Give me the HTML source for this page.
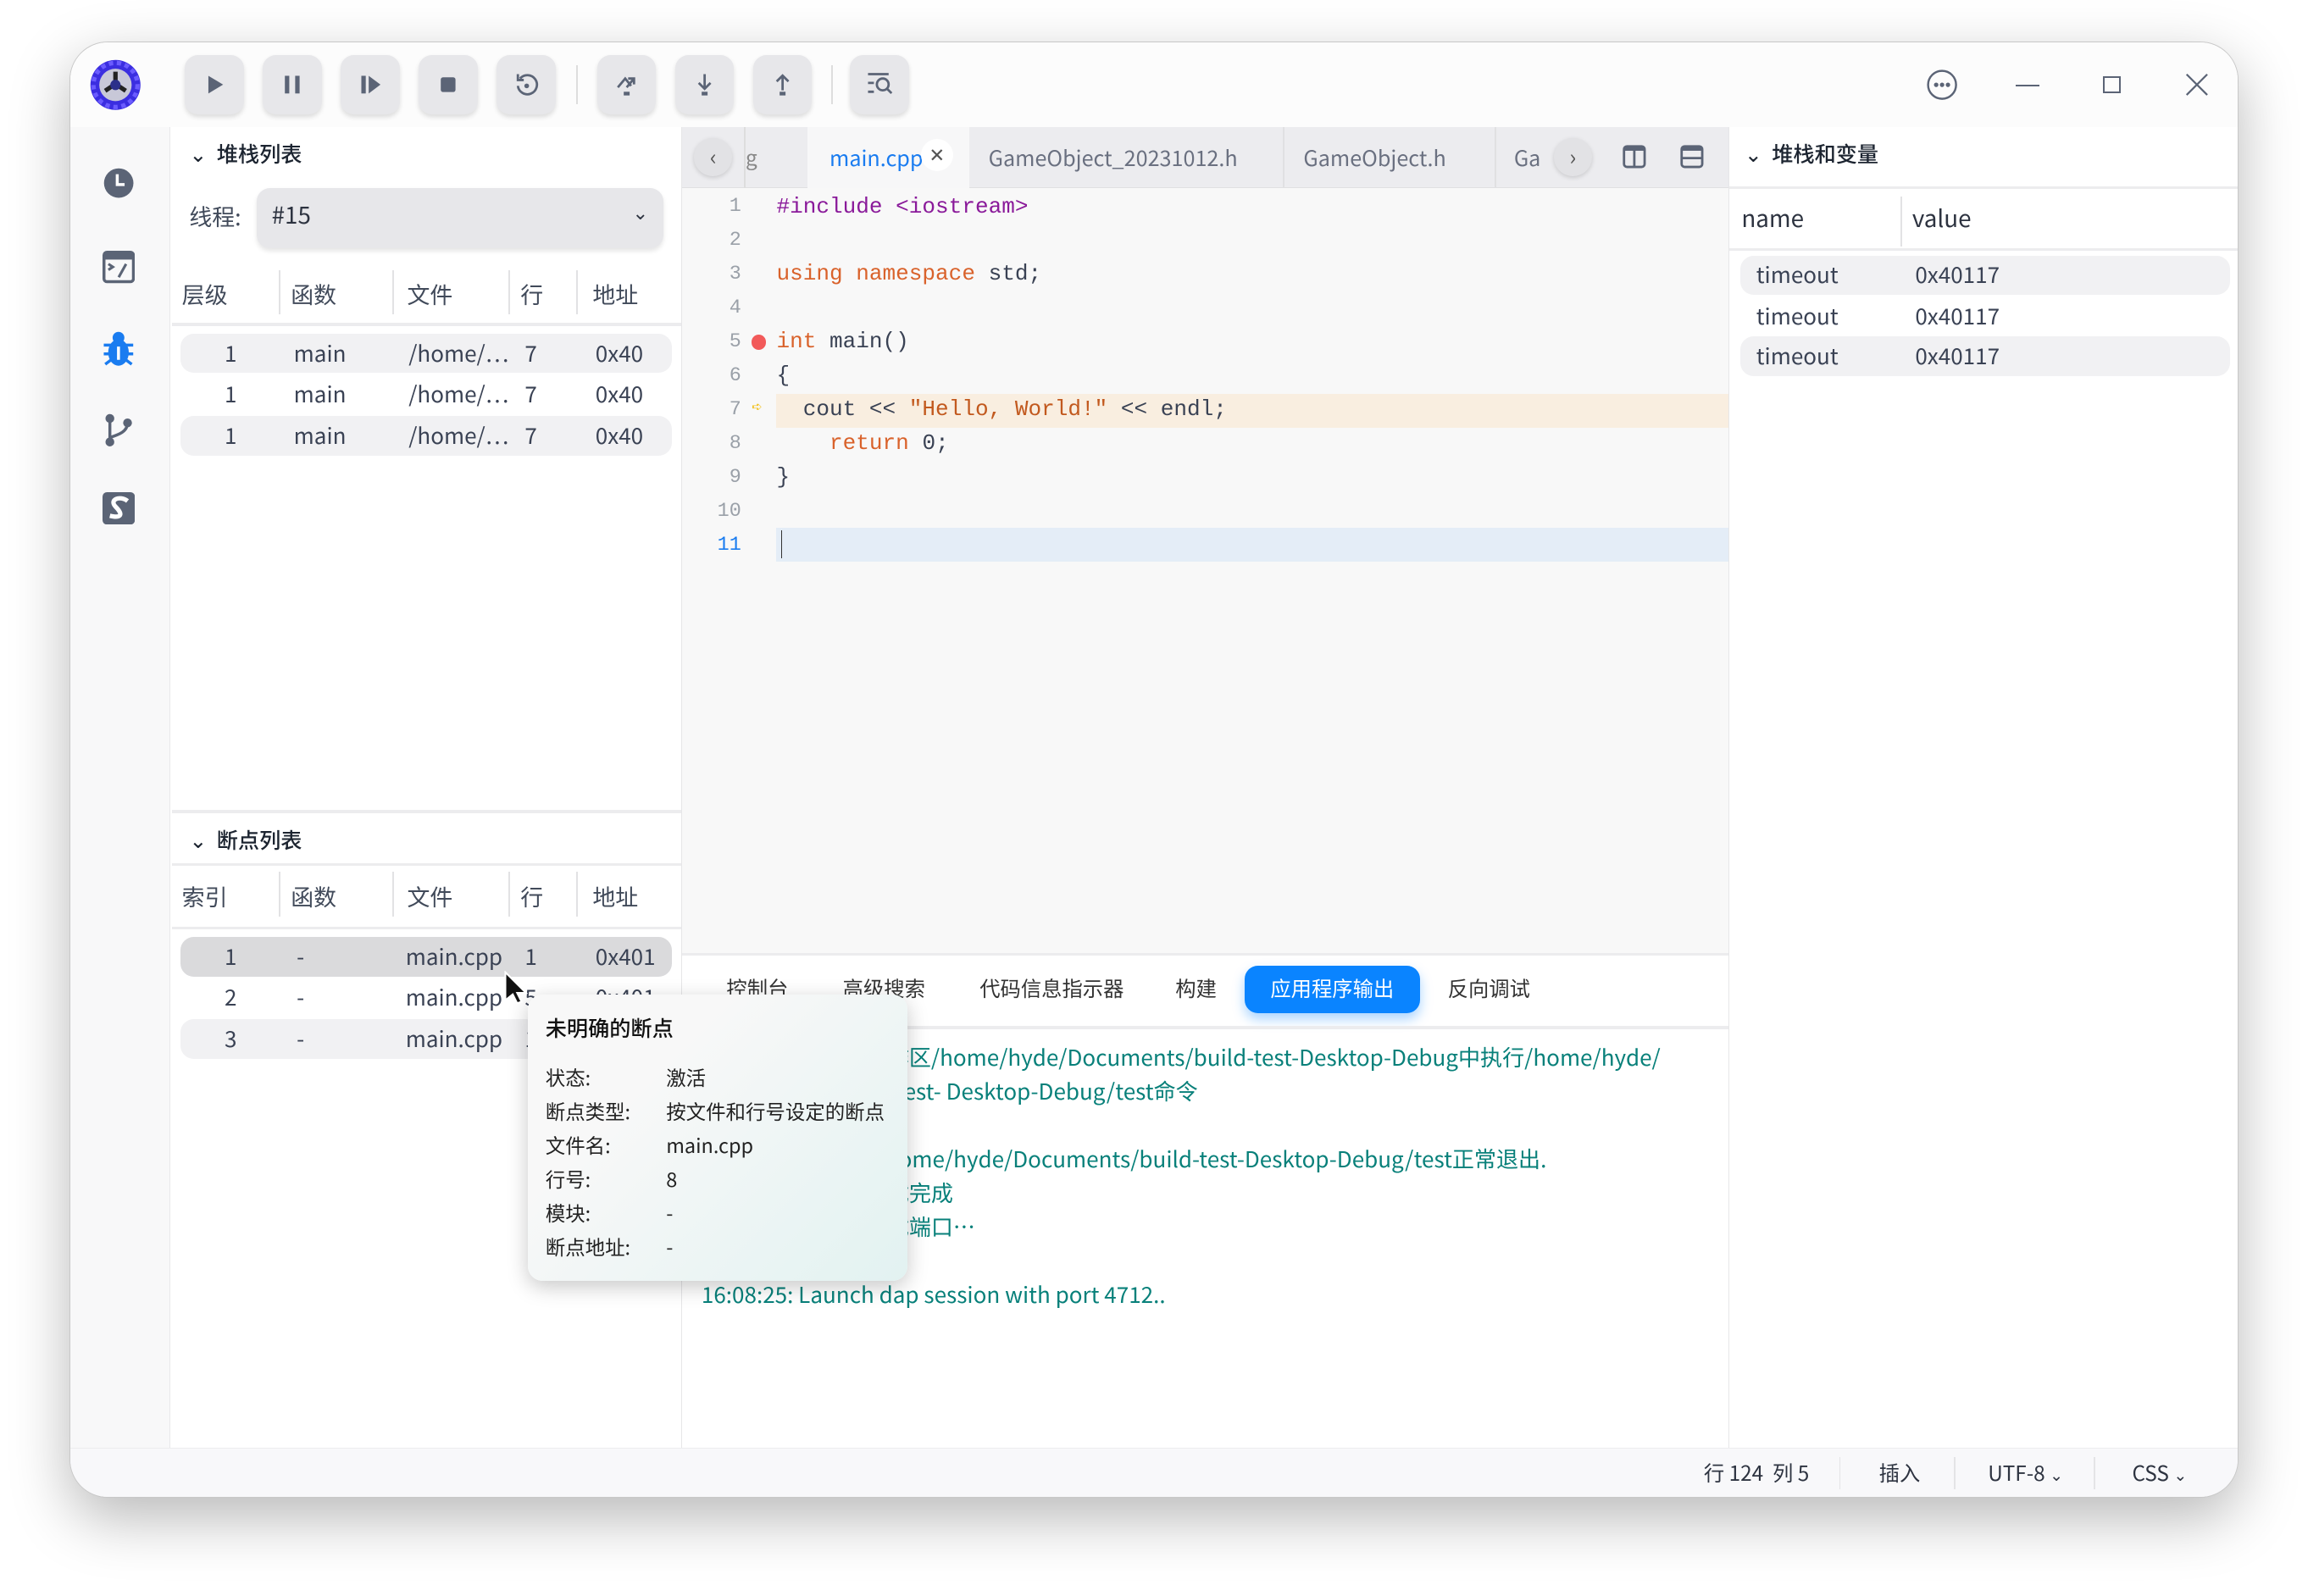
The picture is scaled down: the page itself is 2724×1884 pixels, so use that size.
<!DOCTYPE html>
<html><head><meta charset="utf-8">
<style>
*{box-sizing:border-box;margin:0;padding:0}
html,body{width:2724px;height:1884px;overflow:hidden;background:#fff}
#z{zoom:1.7372;width:1568px;height:1085px;position:relative;font-family:"Noto Sans CJK SC","Liberation Sans",sans-serif;color:#2d3340;font-size:15px;line-height:1.2}
.abs{position:absolute}
.win{left:47px;top:28px;width:1474px;height:990px;border-radius:26px;background:#fff;box-shadow:0 14px 40px rgba(0,0,0,.28);overflow:hidden;border:1px solid #c8c8c8}
.tb{left:0;top:0;width:1474px;height:58px;background:#fcfcfc}
.btn{top:9px;width:40px;height:40px;border-radius:9px;background:#e7e7ea;box-shadow:0 2px 3px rgba(0,0,0,.12);display:flex;align-items:center;justify-content:center}
.sep{top:16px;width:1px;height:26px;background:#ddd}
.side{left:0;top:58px;width:68px;height:897px;background:#f8f8f9;border-right:1px solid #e8e8ea}
.lp{left:69px;top:58px;width:347px;height:897px;background:#fff;border-right:1px solid #e6e6e8}
.hdr{font-size:14.5px;color:#1c2430;font-weight:500}
.th{color:#414a5a;font-size:15.5px}
.row{left:6px;width:334px;height:27px;border-radius:9px}
.cell{position:absolute;top:4px;font-size:15px;color:#3a4254}
.vl{position:absolute;width:1px;background:#e2e2e4}
.code{font-family:"Liberation Mono","DejaVu Sans Mono",monospace;font-size:15px}
.ln{position:absolute;width:40px;text-align:right;color:#9aa0a8;font-family:"Liberation Mono",monospace;font-size:13.5px}
.cl{position:absolute;left:64px;white-space:pre;color:#3a4254}
.out{position:absolute;color:#08807a;font-size:15px;white-space:nowrap}
.tt{position:absolute;font-size:13.5px;color:#222}
</style></head><body><div id="z">
<div class="abs win">
 <div class="abs tb">
  <svg class="abs" style="left:13px;top:11px" width="36" height="36" viewBox="0 0 36 36"><circle cx="18" cy="18" r="17" fill="#3b2ee0"/><circle cx="18" cy="18" r="15" fill="none" stroke="#6b5cff" stroke-width="3" stroke-dasharray="3 2.5"/><circle cx="18" cy="18" r="11" fill="#c8c8d8"/><path d="M18 9v7M11 22l6-4M25 22l-6-4" stroke="#222" stroke-width="3"/><circle cx="18" cy="18" r="3.5" fill="#2b2f8a"/></svg>
  <div class="abs btn" style="left:78px"><svg width="16" height="16"><path d="M4 2l10 6-10 6z" fill="#5b6476"/></svg></div>
  <div class="abs btn" style="left:131px"><svg width="16" height="16"><rect x="3" y="2" width="3" height="12" fill="#5b6476"/><rect x="10" y="2" width="3" height="12" fill="#5b6476"/></svg></div>
  <div class="abs btn" style="left:184px"><svg width="16" height="16"><rect x="2" y="2" width="3" height="12" fill="#5b6476"/><path d="M7 2l8 6-8 6z" fill="#5b6476"/></svg></div>
  <div class="abs btn" style="left:237px"><svg width="16" height="16"><rect x="3" y="3" width="10" height="10" rx="1.5" fill="#5b6476"/></svg></div>
  <div class="abs btn" style="left:290px"><svg width="18" height="18"><path d="M4.5 5A6.5 6.5 0 1 1 3 10" fill="none" stroke="#5b6476" stroke-width="1.6"/><path d="M3 2v4h4" fill="none" stroke="#5b6476" stroke-width="1.6"/><circle cx="9" cy="10" r="1.6" fill="#5b6476"/></svg></div>
  <div class="abs sep" style="left:344px"></div>
  <div class="abs btn" style="left:358px"><svg width="18" height="18"><path d="M3 11l5-6 4 5M10 5h4v4M14 5l-5 6" fill="none" stroke="#5b6476" stroke-width="1.6"/><rect x="7" y="14" width="4" height="2.5" fill="#5b6476"/></svg></div>
  <div class="abs btn" style="left:411px"><svg width="18" height="18"><path d="M9 2v10M5 8l4 4 4-4" fill="none" stroke="#5b6476" stroke-width="1.6"/><rect x="7" y="14" width="4" height="2.5" fill="#5b6476"/></svg></div>
  <div class="abs btn" style="left:464px"><svg width="18" height="18"><path d="M9 13V3M5 7l4-4 4 4" fill="none" stroke="#5b6476" stroke-width="1.6"/><rect x="7" y="14" width="4" height="2.5" fill="#5b6476"/></svg></div>
  <div class="abs sep" style="left:517px"></div>
  <div class="abs btn" style="left:530px"><svg width="20" height="18"><path d="M2 2h14M2 8h4M2 14h4" stroke="#5b6476" stroke-width="1.6"/><circle cx="12" cy="9" r="4" fill="none" stroke="#5b6476" stroke-width="1.6"/><path d="M15 12l3 3" stroke="#5b6476" stroke-width="1.6"/></svg></div>
  <svg class="abs" style="left:1261px;top:18px" width="22" height="22"><circle cx="11" cy="11" r="9.5" fill="none" stroke="#5b6476" stroke-width="1.4"/><circle cx="7" cy="11" r="1.5" fill="#5b6476"/><circle cx="11" cy="11" r="1.5" fill="#5b6476"/><circle cx="15" cy="11" r="1.5" fill="#5b6476"/></svg>
  <div class="abs" style="left:1322px;top:29px;width:16px;height:1.4px;background:#5b6476"></div>
  <div class="abs" style="left:1381px;top:23px;width:12px;height:12px;border:1.4px solid #5b6476"></div>
  <svg class="abs" style="left:1437px;top:21px" width="16" height="16"><path d="M1 1l14 14M15 1L1 15" stroke="#5b6476" stroke-width="1.3"/></svg>
 </div>
 <div class="abs side">
  <svg class="abs" style="left:22px;top:27px" width="22" height="22"><circle cx="11" cy="11" r="10" fill="#5b6476"/><path d="M10 5v7h5" stroke="#fff" stroke-width="2" fill="none"/></svg>
  <svg class="abs" style="left:22px;top:84px" width="22" height="22"><rect x="1" y="1" width="20" height="20" rx="2" fill="none" stroke="#5b6476" stroke-width="2"/><rect x="1" y="1" width="20" height="5" fill="#5b6476"/><path d="M4 9l3 2-3 2M16 9l-5 9" stroke="#5b6476" stroke-width="1.8" fill="none"/></svg>
  <svg class="abs" style="left:21px;top:138px" width="24" height="26"><ellipse cx="12" cy="15" rx="7" ry="9" fill="#1a7cf0"/><circle cx="12" cy="5" r="4" fill="#1a7cf0"/><path d="M2 10h20M2 16h20M3 23l4-3M21 23l-4-3" stroke="#1a7cf0" stroke-width="2"/><rect x="11" y="11" width="2" height="9" fill="#fff"/></svg>
  <svg class="abs" style="left:22px;top:194px" width="22" height="24"><circle cx="5" cy="4" r="3" fill="#5b6476"/><circle cx="5" cy="20" r="3" fill="#5b6476"/><circle cx="17" cy="7" r="3" fill="#5b6476"/><path d="M5 4v16M17 7c0 6-6 8-12 10" stroke="#5b6476" stroke-width="2" fill="none"/></svg>
  <svg class="abs" style="left:22px;top:248px" width="22" height="22"><rect x="0" y="0" width="22" height="22" rx="3" fill="#5b6476"/><path d="M17 6C12 2 4 5 9 10s4 8-4 6" stroke="#fff" stroke-width="3" fill="none"/></svg>
 </div>
 <div class="abs lp">
  <div class="abs hdr" style="left:12px;top:9px">⌄&nbsp;&nbsp;堆栈列表</div>
  <div class="abs th" style="left:12px;top:51px">线程:</div>
  <div class="abs" style="left:58px;top:41px;width:276px;height:41px;border-radius:9px;background:#e7e7ea;box-shadow:0 2px 3px rgba(0,0,0,.1)"><span style="position:absolute;left:10px;top:9px;font-size:16px">#15</span><span style="position:absolute;right:10px;top:8px;font-size:13px">⌄</span></div>
  <div class="abs th" style="left:7px;top:104px">层级</div><div class="abs th" style="left:81px;top:104px">函数</div><div class="abs th" style="left:160px;top:104px">文件</div><div class="abs th" style="left:237px;top:104px">行</div><div class="abs th" style="left:286px;top:104px">地址</div>
  <div class="vl" style="left:73px;top:97px;height:30px"></div><div class="vl" style="left:150px;top:97px;height:30px"></div><div class="vl" style="left:229px;top:97px;height:30px"></div><div class="vl" style="left:275px;top:97px;height:30px"></div>
  <div class="abs" style="left:0;top:133px;width:346px;height:2px;background:#ececee"></div>
  <div class="abs row" style="top:140px;background:#f1f1f3"><span class="cell" style="left:30px">1</span><span class="cell" style="left:77px">main</span><span class="cell" style="left:155px">/home/…</span><span class="cell" style="left:234px">7</span><span class="cell" style="left:282px">0x40</span></div>
  <div class="abs row" style="top:168px"><span class="cell" style="left:30px">1</span><span class="cell" style="left:77px">main</span><span class="cell" style="left:155px">/home/…</span><span class="cell" style="left:234px">7</span><span class="cell" style="left:282px">0x40</span></div>
  <div class="abs row" style="top:196px;background:#f1f1f3"><span class="cell" style="left:30px">1</span><span class="cell" style="left:77px">main</span><span class="cell" style="left:155px">/home/…</span><span class="cell" style="left:234px">7</span><span class="cell" style="left:282px">0x40</span></div>
  <div class="abs" style="left:0;top:464px;width:346px;height:2px;background:#ececee"></div>
  <div class="abs hdr" style="left:12px;top:475px">⌄&nbsp;&nbsp;断点列表</div>
  <div class="abs" style="left:0;top:500px;width:346px;height:2px;background:#ececee"></div>
  <div class="abs th" style="left:7px;top:513px">索引</div><div class="abs th" style="left:81px;top:513px">函数</div><div class="abs th" style="left:160px;top:513px">文件</div><div class="abs th" style="left:237px;top:513px">行</div><div class="abs th" style="left:286px;top:513px">地址</div>
  <div class="vl" style="left:73px;top:506px;height:30px"></div><div class="vl" style="left:150px;top:506px;height:30px"></div><div class="vl" style="left:229px;top:506px;height:30px"></div><div class="vl" style="left:275px;top:506px;height:30px"></div>
  <div class="abs" style="left:0;top:543px;width:346px;height:2px;background:#ececee"></div>
  <div class="abs row" style="top:550px;background:#dadadc"><span class="cell" style="left:30px">1</span><span class="cell" style="left:79px">-</span><span class="cell" style="left:153px">main.cpp</span><span class="cell" style="left:234px">1</span><span class="cell" style="left:282px">0x401</span></div>
  <div class="abs row" style="top:578px"><span class="cell" style="left:30px">2</span><span class="cell" style="left:79px">-</span><span class="cell" style="left:153px">main.cpp</span><span class="cell" style="left:234px">5</span><span class="cell" style="left:282px">0x401</span></div>
  <div class="abs row" style="top:606px;background:#f1f1f3"><span class="cell" style="left:30px">3</span><span class="cell" style="left:79px">-</span><span class="cell" style="left:153px">main.cpp</span><span class="cell" style="left:234px">1</span><span class="cell" style="left:282px">0x401</span></div>
 </div>
 <!-- editor -->
 <div class="abs" style="left:416px;top:58px;width:711px;height:41px;background:#ececef;border-bottom:1px solid #e0e0e2">
  <div class="abs" style="left:8px;top:7px;width:26px;height:26px;border-radius:13px;background:#e2e2e5;box-shadow:0 1px 3px rgba(0,0,0,.15);text-align:center;line-height:25px;color:#555">‹</div>
  <div class="abs" style="left:43px;top:12px;color:#888;font-size:14px">g</div>
  <div class="abs" style="left:42px;top:0;width:1px;height:41px;background:#ddd"></div>
  <div class="abs" style="left:85px;top:0;width:110px;height:41px;background:#f7f7f8"></div>
  <div class="abs" style="left:100px;top:12px;color:#1a7cf0;font-size:14.5px">main.cpp</div>
  <div class="abs" style="left:162px;top:8px;width:22px;height:22px;border-radius:11px;background:#fff;text-align:center;line-height:21px;font-size:13px;color:#555">✕</div>
  <div class="abs" style="left:208px;top:12px;color:#6a7080;font-size:14.5px">GameObject_20231012.h</div>
  <div class="abs" style="left:408px;top:0;width:1px;height:41px;background:#e0e0e2"></div>
  <div class="abs" style="left:422px;top:12px;color:#6a7080;font-size:14.5px">GameObject.h</div>
  <div class="abs" style="left:552px;top:0;width:1px;height:41px;background:#e0e0e2"></div>
  <div class="abs" style="left:565px;top:12px;color:#6a7080;font-size:14.5px">Ga</div>
  <div class="abs" style="left:592px;top:7px;width:26px;height:26px;border-radius:13px;background:#e2e2e5;box-shadow:0 1px 3px rgba(0,0,0,.15);text-align:center;line-height:25px;color:#555">›</div>
  <svg class="abs" style="left:639px;top:12px" width="16" height="16"><rect x="1" y="1" width="14" height="14" rx="2" fill="none" stroke="#5b6476" stroke-width="1.6"/><rect x="1" y="1" width="14" height="3" fill="#5b6476"/><path d="M8 2v13" stroke="#5b6476" stroke-width="1.6"/></svg>
  <svg class="abs" style="left:678px;top:12px" width="16" height="16"><rect x="1" y="1" width="14" height="14" rx="2" fill="none" stroke="#5b6476" stroke-width="1.6"/><rect x="1" y="1" width="14" height="3" fill="#5b6476"/><path d="M1 9h14" stroke="#5b6476" stroke-width="1.6"/></svg>
 </div>
 <div class="abs code" style="left:416px;top:99px;width:711px;height:520px;background:#f8f8f8">
  <div class="abs" style="left:64px;top:140px;width:647px;height:23px;background:#f9eee0"></div>
  <div class="abs" style="left:64px;top:231px;width:647px;height:23px;background:#e4edf7"></div>
  <div class="ln" style="top:5px">1</div><div class="ln" style="top:28px">2</div><div class="ln" style="top:51px">3</div><div class="ln" style="top:74px">4</div><div class="ln" style="top:97px">5</div><div class="ln" style="top:120px">6</div><div class="ln" style="top:143px">7</div><div class="ln" style="top:166px">8</div><div class="ln" style="top:189px">9</div><div class="ln" style="top:212px">10</div><div class="ln" style="top:235px;color:#1a7cf0">11</div>
  <div class="abs" style="left:47px;top:100px;width:10px;height:10px;border-radius:5px;background:#f25a5a"></div>
  <div class="abs" style="left:47px;top:143px;color:#f2c01a;font-size:12px">➪</div>
  <div class="cl" style="top:4px;color:#8a1a9a">#include &lt;iostream&gt;</div>
  <div class="cl" style="top:50px"><span style="color:#d9622b">using namespace</span> std;</div>
  <div class="cl" style="top:96px"><span style="color:#d9622b">int</span> main()</div>
  <div class="cl" style="top:119px">{</div>
  <div class="cl" style="top:142px">  cout &lt;&lt; <span style="color:#c2591e">"Hello, World!"</span> &lt;&lt; endl;</div>
  <div class="cl" style="top:165px">    <span style="color:#d9622b">return</span> 0;</div>
  <div class="cl" style="top:188px">}</div>
  <div class="abs" style="left:67px;top:233px;width:1px;height:19px;background:#333"></div>
 </div>
 <div class="abs" style="left:416px;top:619px;width:711px;height:336px;background:#fff;border-top:2px solid #ececee">
  <div class="abs" style="left:30px;top:14px;font-size:14px;color:#333">控制台</div>
  <div class="abs" style="left:109px;top:14px;font-size:14px;color:#333">高级搜索</div>
  <div class="abs" style="left:202px;top:14px;font-size:14px;color:#333">代码信息指示器</div>
  <div class="abs" style="left:335px;top:14px;font-size:14px;color:#333">构建</div>
  <div class="abs" style="left:382px;top:7px;width:119px;height:32px;border-radius:9px;background:#0a84ff;box-shadow:0 4px 8px rgba(10,132,255,.35);color:#fff;font-size:14px;text-align:center;line-height:31px">应用程序输出</div>
  <div class="abs" style="left:520px;top:14px;font-size:14px;color:#333">反向调试</div>
  <div class="abs" style="left:0;top:48px;width:711px;height:2px;background:#ececee"></div>
  <div class="out" style="left:124px;top:60px">工作区/home/hyde/Documents/build-test-Desktop-Debug中执行/home/hyde/</div>
  <div class="out" style="left:145px;top:83px">test- Desktop-Debug/test命令</div>
  <div class="out" style="left:132px;top:129px">/home/hyde/Documents/build-test-Desktop-Debug/test正常退出.</div>
  <div class="out" style="left:124px;top:152px">调试完成</div>
  <div class="out" style="left:124px;top:175px">调试端口…</div>
  <div class="out" style="left:13px;top:221px">16:08:25: Launch dap session with port 4712..</div>
 </div>
 <!-- right panel -->
 <div class="abs" style="left:1127px;top:58px;width:347px;height:897px;background:#fff;border-left:1px solid #e6e6e8">
  <div class="abs hdr" style="left:10px;top:9px">⌄&nbsp;&nbsp;堆栈和变量</div>
  <div class="abs" style="left:0;top:40px;width:347px;height:2px;background:#ececee"></div>
  <div class="abs" style="left:8px;top:52px;font-size:16px;color:#2d3340">name</div>
  <div class="abs" style="left:124px;top:52px;font-size:16px;color:#2d3340">value</div>
  <div class="vl" style="left:116px;top:47px;height:34px"></div>
  <div class="abs" style="left:0;top:82px;width:347px;height:2px;background:#ececee"></div>
  <div class="abs" style="left:7px;top:87px;width:333px;height:27px;border-radius:9px;background:#f1f1f3"></div>
  <div class="abs" style="left:7px;top:142px;width:333px;height:27px;border-radius:9px;background:#f1f1f3"></div>
  <div class="abs" style="left:18px;top:91px;color:#3a4254">timeout</div><div class="abs" style="left:126px;top:91px;color:#3a4254">0x40117</div>
  <div class="abs" style="left:18px;top:119px;color:#3a4254">timeout</div><div class="abs" style="left:126px;top:119px;color:#3a4254">0x40117</div>
  <div class="abs" style="left:18px;top:146px;color:#3a4254">timeout</div><div class="abs" style="left:126px;top:146px;color:#3a4254">0x40117</div>
 </div>
 <!-- status -->
 <div class="abs" style="left:0;top:955px;width:1474px;height:35px;background:#f8f8fa;border-top:1px solid #ececee;font-size:14px;color:#2d3340">
  <div class="abs" style="left:1110px;top:8px">行 124&nbsp; 列 5</div>
  <div class="abs" style="left:1202px;top:6px;width:1px;height:22px;background:#e4e4e6"></div>
  <div class="abs" style="left:1229px;top:8px">插入</div>
  <div class="abs" style="left:1280px;top:6px;width:1px;height:22px;background:#e4e4e6"></div>
  <div class="abs" style="left:1303px;top:8px">UTF-8 <span style="font-size:11px">⌄</span></div>
  <div class="abs" style="left:1375px;top:6px;width:1px;height:22px;background:#e4e4e6"></div>
  <div class="abs" style="left:1401px;top:8px">CSS <span style="font-size:11px">⌄</span></div>
 </div>
 <!-- tooltip -->
 <div class="abs" style="left:311px;top:647px;width:258px;height:195px;border-radius:10px;background:linear-gradient(135deg,#f8f8f8 30%,#e2f2f1);box-shadow:0 4px 14px rgba(0,0,0,.22)">
  <div class="tt" style="left:12px;top:14px;font-size:14.5px;color:#111;font-weight:500">未明确的断点</div>
  <div class="tt" style="left:12px;top:48px">状态:</div><div class="tt" style="left:94px;top:48px">激活</div>
  <div class="tt" style="left:12px;top:71px">断点类型:</div><div class="tt" style="left:94px;top:71px">按文件和行号设定的断点</div>
  <div class="tt" style="left:12px;top:94px">文件名:</div><div class="tt" style="left:94px;top:94px">main.cpp</div>
  <div class="tt" style="left:12px;top:117px">行号:</div><div class="tt" style="left:94px;top:117px">8</div>
  <div class="tt" style="left:12px;top:140px">模块:</div><div class="tt" style="left:94px;top:140px">-</div>
  <div class="tt" style="left:12px;top:163px">断点地址:</div><div class="tt" style="left:94px;top:163px">-</div>
 </div>
 <svg class="abs" style="left:294px;top:631px" width="18" height="24"><path d="M2 1v19l5-4 3 6 3-1-3-6h6z" fill="#111" stroke="#fff" stroke-width="1.2"/></svg>
</div>
</div></body></html>
